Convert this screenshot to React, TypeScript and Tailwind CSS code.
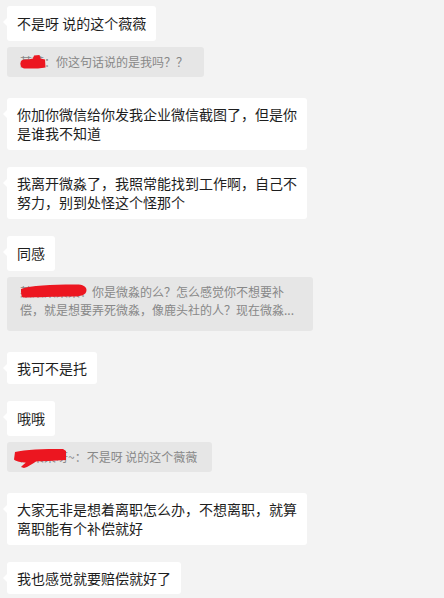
import React from 'react';

type Quote = {
  name: string;
  text: string;
  mark: 'a' | 'b' | 'c';
  className: string;
};

type Message = {
  text: string;
  pad: string;
  quote?: Quote;
};

const messages: Message[] = [
  {
    text: '不是呀 说的这个薇薇',
    pad: 'py-[8px]',
    quote: { name: '某某', text: '：你这句话说的是我吗？？', mark: 'a', className: 'pr-[16px] pb-[6px]' },
  },
  { text: '你加你微信给你发我企业微信截图了，但是你是谁我不知道', pad: 'py-[7px]' },
  { text: '我离开微淼了，我照常能找到工作啊，自己不努力，别到处怪这个怪那个', pad: 'py-[7px]' },
  {
    text: '同感',
    pad: 'py-[8px]',
    quote: {
      name: '某某某某某',
      text: '：你是微淼的么？怎么感觉你不想要补偿，就是想要弄死微淼，像鹿头社的人？现在微淼...',
      mark: 'b',
      className: 'w-[306px] pr-[18px] pb-[12px]',
    },
  },
  { text: '我可不是托', pad: 'py-[6.5px]' },
  {
    text: '哦哦',
    pad: 'py-[8px]',
    quote: { name: '某某某呀~ ', text: '：不是呀 说的这个薇薇', mark: 'c', className: 'pr-[15px] pb-[6px]' },
  },
  { text: '大家无非是想着离职怎么办，不想离职，就算离职能有个补偿就好', pad: 'py-[7px]' },
  { text: '我也感觉就要赔偿就好了', pad: 'py-[6.5px]' },
];

// red marker strokes hiding the names
const Scribble: React.FC<{ kind: Quote['mark'] }> = ({ kind }) => {
  if (kind === 'a') {
    return (
      <svg className="absolute left-0 top-[2px]" width="26" height="14" viewBox="0 0 26 14">
        <path d="M0.5 8 C0.5 5 3 4 8 4.5 L13 3.5 L14 0.5 L19.5 0 L20.5 3.5 L25 4.5 L25.5 12.5 L18 13.5 L6 13.5 C2 13.5 0 11.5 0.5 8 Z" fill="#ec1620" />
      </svg>
    );
  }
  if (kind === 'b') {
    return (
      <svg className="absolute left-[1px] top-[1px]" width="66" height="14" viewBox="0 0 66 14">
        <path d="M0 5 C10 1.5 30 0.5 53 0.5 C61 0 65.5 2 65.5 6 C65.5 11 60 12.5 51 12.5 C35 12.5 15 13.5 2 13.5 C0 12.5 0 8 0 5 Z" fill="#ec1620" />
      </svg>
    );
  }
  return (
    <svg className="absolute left-[-7px] top-[1px]" width="53" height="19" viewBox="0 0 53 19">
      <path d="M2 3 C12 0.5 30 0 50 0 L53 2 L53 11 C40 12 30 12 23 12.5 C19 15 15 18 11 19 L8 18 C10 16 12 14 13 13.5 C8 13.5 3 12.5 1 10.5 Z" fill="#ec1620" />
    </svg>
  );
};

const Bubble: React.FC<{ text: string; pad: string }> = ({ text, pad }) => (
  <div className={`relative max-w-[300px] rounded-[3px] bg-white px-[10px] text-[14px] leading-[19px] text-[#1e1e1e] ${pad}`}>
    <span className="absolute left-[-4px] top-[12px] h-0 w-0 border-y-[4px] border-r-[4px] border-y-transparent border-r-white" />
    {text}
  </div>
);

const QuoteBox: React.FC<{ quote: Quote }> = ({ quote }) => (
  <div className={`mt-[6px] mb-[4px] rounded-[3px] bg-[#e6e6e6] pl-[13px] pt-[6px] text-[12px] leading-[18px] text-[#888] ${quote.className}`}>
    <span className="relative inline-block">
      {quote.name}
      <Scribble kind={quote.mark} />
    </span>
    {quote.text}
  </div>
);

export default function App() {
  return (
    <div className="h-[598px] w-full overflow-hidden bg-[#f3f3f3] px-[7px] pt-[6px] font-['Noto_Sans_CJK_SC',sans-serif]">
      <div className="flex flex-col items-start">
        {messages.map((m, i) => (
          <div key={i} className="mb-[17px] flex flex-col items-start">
            <Bubble text={m.text} pad={m.pad} />
            {m.quote && <QuoteBox quote={m.quote} />}
          </div>
        ))}
      </div>
    </div>
  );
}
